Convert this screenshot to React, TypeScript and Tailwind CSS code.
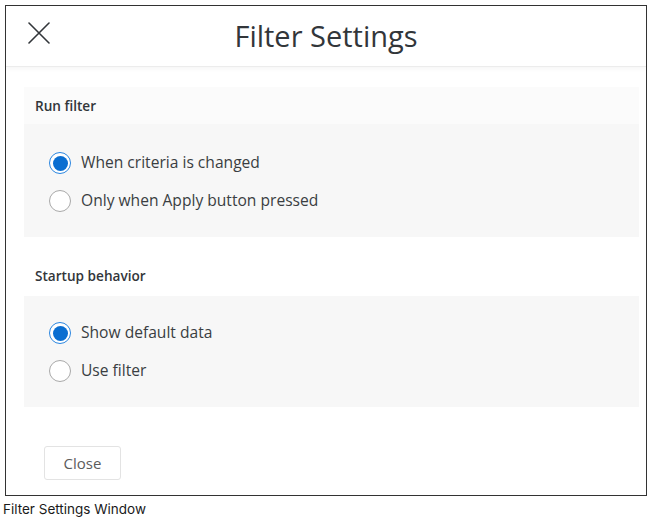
import React from "react";

function Radio({ checked, label }: { checked: boolean; label: string }) {
  return (
    <div className="flex items-center h-[38px]">
      {checked ? (
        <span className="w-[22px] h-[22px] rounded-full border-[1.5px] border-[#2a86e0] bg-white flex items-center justify-center">
          <span className="w-[15px] h-[15px] rounded-full bg-[#0a6ed1]" />
        </span>
      ) : (
        <span className="w-[22px] h-[22px] rounded-full border border-[#a9a9a9] bg-white" />
      )}
      <span className="ml-[10px] text-[15.6px] text-[#3a3e42]">{label}</span>
    </div>
  );
}

export default function App() {
  return (
    <div className="w-[655px] h-[519px] bg-white" style={{ fontFamily: '"Open Sans", sans-serif' }}>
      <div className="pt-[5px] pl-[5px]">
        <div className="w-[642px] h-[491px] border border-[#333333] flex flex-col">
          <div className="relative h-[61px] flex items-center justify-center border-b border-[#ececec] shadow-[0_2px_4px_rgba(0,0,0,0.04)]">
            <svg className="absolute left-[22px] top-[16px]" width="22" height="22" viewBox="0 0 22 22" fill="none" stroke="#32363a" strokeWidth="1.6" strokeLinecap="round">
              <path d="M1 1L21 21M21 1L1 21" />
            </svg>
            <span className="text-[29px] text-[#32363a] leading-none -mt-[1px]">Filter Settings</span>
          </div>
          <div className="pl-[18px] pr-[7px] pt-[20px] flex flex-col">
            <div className="h-[37px] bg-[#fbfbfb] flex items-center pl-[11px] pt-[1px] text-[13.6px] font-semibold text-[#32363a]">Run filter</div>
            <div className="h-[113px] bg-[#f7f7f7] pl-[25px] pt-[20px]">
              <Radio checked label="When criteria is changed" />
              <Radio checked={false} label="Only when Apply button pressed" />
            </div>
            <div className="h-[59px] flex items-center pl-[11px] pt-[20px] text-[13.6px] font-semibold text-[#32363a]">Startup behavior</div>
            <div className="h-[111px] bg-[#f7f7f7] pl-[25px] pt-[18px]">
              <Radio checked label="Show default data" />
              <Radio checked={false} label="Use filter" />
            </div>
            <div className="pt-[39px] pl-[20px]">
              <button className="w-[77px] h-[34px] border border-[#e3e3e3] rounded-[3px] bg-white text-[15px] text-[#5c5c5c]">Close</button>
            </div>
          </div>
        </div>
      </div>
      <div className="pl-[3px] pt-[3px] text-[13.5px] text-[#1a1a1a]" style={{ fontFamily: 'Inter, sans-serif' }}>Filter Settings Window</div>
    </div>
  );
}
